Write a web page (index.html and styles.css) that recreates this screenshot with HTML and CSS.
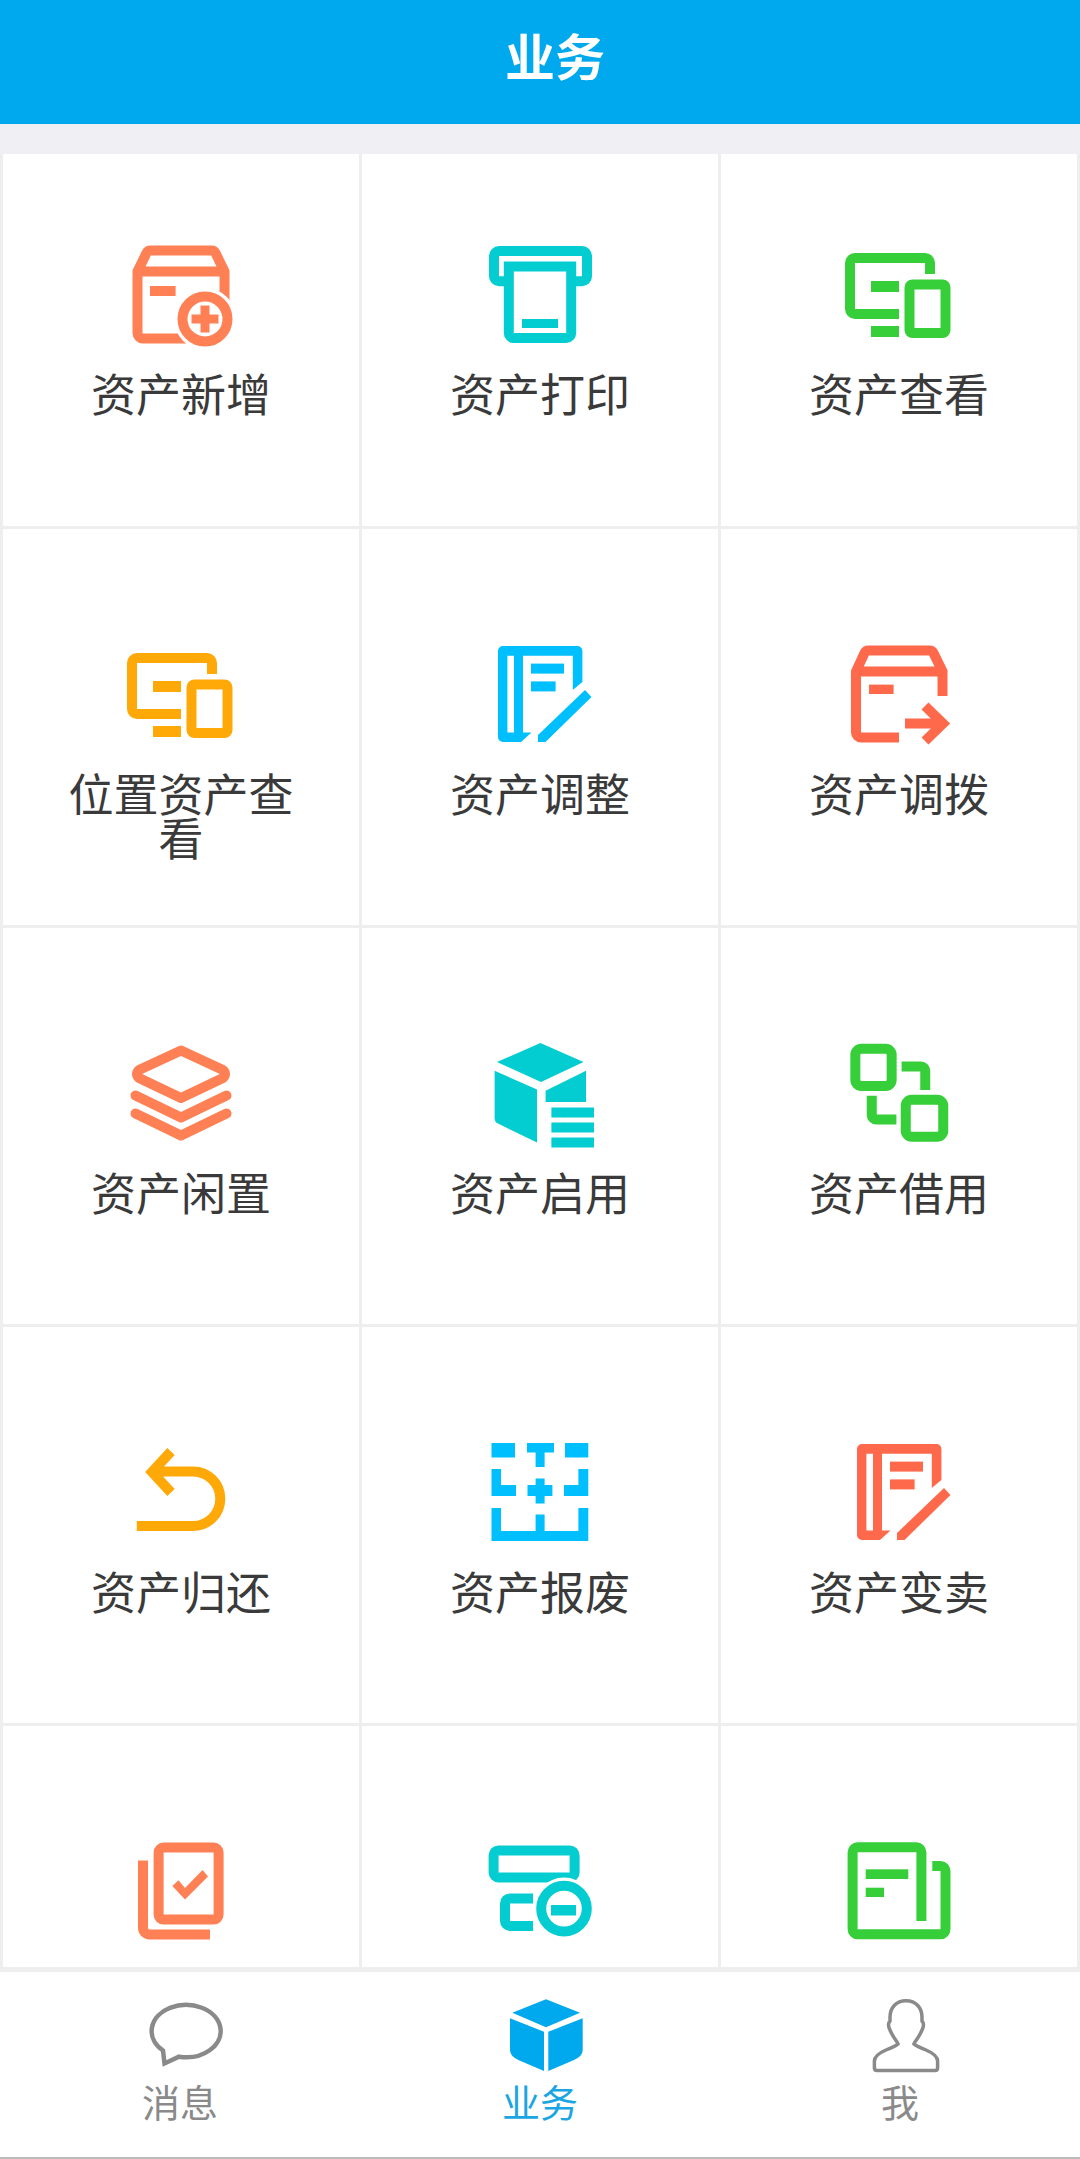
FILE: index.html
```html
<!DOCTYPE html>
<html lang="zh-CN">
<head>
    <meta charset="UTF-8">
    <meta name="viewport" content="width=device-width, initial-scale=1.0">
    <title>业务</title>
    <link rel="stylesheet" href="styles.css">
</head>
<body>
    <header class="topbar">业务</header>

    <main class="content">
        <div class="grid">
            <div class="cell first coral">
                <svg class="icon" viewBox="0 0 100 100">
                    <path class="line" d="M12 94.500a5.500 5.500 0 0 1-5.500-5.500V27.500L15.500 9q1-2.500 4-2.500h61q3 0 4 2.500l9 18.500V89a5.500 5.500 0 0 1-5.500 5.500zM6.500 27.500h87"/>
                    <rect x="19" y="42" width="25.600" height="10"/>
                    <circle class="halo" cx="74" cy="75" r="31"/>
                    <circle class="line" cx="74" cy="75" r="22.500"/>
                    <path d="M69.500 61.500h9v9h9v9h-9v9h-9v-9h-9v-9h9z"/>
                </svg>
                <span class="label">资产新增</span>
            </div>
            <div class="cell first teal">
                <svg class="icon" viewBox="0 0 100 100">
                    <path class="line" d="M18 37.300H9a5 5 0 0 1-5-5V12a5 5 0 0 1 5-5h83a5 5 0 0 1 5 5v20.300a5 5 0 0 1-5 5h-9"/>
                    <path class="line" d="M18.800 22.500h62.400V89a5 5 0 0 1-5 5H23.800a5 5 0 0 1-5-5z"/>
                    <rect x="32" y="75" width="36" height="9"/>
                </svg>
                <span class="label">资产打印</span>
            </div>
            <div class="cell first green">
                <svg class="icon" viewBox="0 0 100 100">
                    <path class="line" d="M50 70H6a5 5 0 0 1-5-5V19a5 5 0 0 1 5-5h70a5 5 0 0 1 5 5v11"/>
                    <rect x="22" y="37" width="28" height="11"/>
                    <rect x="22" y="82" width="28" height="11"/>
                    <rect class="line" x="60.500" y="40.500" width="36" height="48.500" rx="3"/>
                </svg>
                <span class="label">资产查看</span>
            </div>

            <div class="cell amber">
                <svg class="icon" viewBox="0 0 100 100">
                    <path class="line" d="M50 70H6a5 5 0 0 1-5-5V19a5 5 0 0 1 5-5h70a5 5 0 0 1 5 5v11"/>
                    <rect x="22" y="37" width="28" height="11"/>
                    <rect x="22" y="82" width="28" height="11"/>
                    <rect class="line" x="60.500" y="40.500" width="36" height="48.500" rx="3"/>
                </svg>
                <span class="label">位置资产查看</span>
            </div>
            <div class="cell blue">
                <svg class="icon" viewBox="0 0 100 100">
                    <path fill-rule="evenodd" d="M13 2h74.400a5 5 0 0 1 5 5v31l-9.600 8V11.700H33v76.800h8.500L31 98H13a5 5 0 0 1-5-5V7a5 5 0 0 1 5-5zM17.400 11.700H24v76.800h-6.600z"/>
                    <rect x="41" y="19.600" width="33" height="10"/>
                    <rect x="41" y="37.400" width="24.600" height="10"/>
                    <path d="M95 46l6.500 7-46 45H48v-7z"/>
                </svg>
                <span class="label">资产调整</span>
            </div>
            <div class="cell tomato">
                <svg class="icon" viewBox="0 0 100 100">
                    <path class="line" d="M50 93.500H12a5 5 0 0 1-5-5V27.500L15.500 9q1-2.500 4-2.500h61q3 0 4 2.500l9 18.500V52M7 27.500h86.500"/>
                    <rect x="20" y="40.600" width="24.600" height="9.400"/>
                    <path class="line" d="M56 79.600h38M76 62l18 17.600L76 97"/>
                </svg>
                <span class="label">资产调拨</span>
            </div>

            <div class="cell coral">
                <svg class="icon" viewBox="0 0 100 100">
                    <path class="line round" d="M50 7.500L92 27q4 4 0 8L50 55 8 35q-4-4 0-8z"/>
                    <path class="line round" d="M4.500 52.500l45.500 22 45.500-22M4.500 70.500l45.500 22 45.500-22"/>
                </svg>
                <span class="label">资产闲置</span>
            </div>
            <div class="cell teal">
                <svg class="icon" viewBox="0 0 100 100">
                    <path d="M50.400 0L93.500 19 51 39 7 19z"/>
                    <path d="M4.600 27.700L47 46.600v52.900L8 80.600q-3.400-1.600-3.400-5.600z"/>
                    <path d="M55.600 47.700L96 27.700V59H55.600z"/>
                    <rect x="61.400" y="64.500" width="42.600" height="10"/>
                    <rect x="61.400" y="79.500" width="42.600" height="10"/>
                    <rect x="61.400" y="94.500" width="42.600" height="10"/>
                </svg>
                <span class="label">资产启用</span>
            </div>
            <div class="cell green">
                <svg class="icon" viewBox="0 0 100 100">
                    <rect class="line" x="6.350" y="5.750" width="36.300" height="37.200" rx="6"/>
                    <rect class="line" x="56.750" y="56.750" width="37.500" height="37" rx="6"/>
                    <path class="line" d="M52.600 23.500H72a4.250 4.250 0 0 1 4.250 4.250V47M22.750 52.700V72a4.600 4.600 0 0 0 4.600 4.600H47.400"/>
                </svg>
                <span class="label">资产借用</span>
            </div>

            <div class="cell amber">
                <svg class="icon" viewBox="0 0 100 100">
                    <path class="line" d="M5.800 84H62a27.300 27.300 0 0 0 0-54.600H24M40 9.500L21 30l19 20.500"/>
                </svg>
                <span class="label">资产归还</span>
            </div>
            <div class="cell blue">
                <svg class="icon" viewBox="0 0 100 100">
                    <path d="M1.500 1H25v14.500H1.500zM1.500 27H11v16h15v11H1.500zM75 1h23.300v14.500H75zM88.400 27h9.900v27H74V43h14.400zM37 1h27v9.500h-9.400V25h-9V10.500H37zM45.600 36.500h9V43h7.800v11h-7.800v7.500h-9V54h-8.100V43h8.100zM1.500 66H11v23h34.600V72.500h9V89h33.800V66h9.900v33H1.500z"/>
                </svg>
                <span class="label">资产报废</span>
            </div>
            <div class="cell tomato">
                <svg class="icon" viewBox="0 0 100 100">
                    <path fill-rule="evenodd" d="M13 2h74.400a5 5 0 0 1 5 5v31l-9.600 8V11.700H33v76.800h8.500L31 98H13a5 5 0 0 1-5-5V7a5 5 0 0 1 5-5zM17.400 11.700H24v76.800h-6.600z"/>
                    <rect x="41" y="19.600" width="33" height="10"/>
                    <rect x="41" y="37.400" width="24.600" height="10"/>
                    <path d="M95 46l6.500 7-46 45H48v-7z"/>
                </svg>
                <span class="label">资产变卖</span>
            </div>

            <div class="cell coral">
                <svg class="icon" viewBox="0 0 100 100">
                    <rect class="line" x="27.600" y="6.600" width="60" height="72" rx="5"/>
                    <path class="line" d="M12 19.400V87a6.400 6.400 0 0 0 6.400 6.400H79"/>
                    <path d="M71.600 29l5.400 6.500-23 22.900L41.300 45l6.200-5.700L54 47z"/>
                </svg>
            </div>
            <div class="cell teal">
                <svg class="icon" viewBox="0 0 100 100">
                    <rect class="line" x="3.600" y="9.400" width="81" height="27" rx="5"/>
                    <path class="line" d="M43 57.400H20a5 5 0 0 0-5 5V80a5 5 0 0 0 5 5h23"/>
                    <circle class="halo" cx="74" cy="67.600" r="31"/>
                    <circle class="line" cx="74" cy="67.600" r="22.800"/>
                    <rect x="61" y="64" width="25" height="10.500"/>
                </svg>
            </div>
            <div class="cell green">
                <svg class="icon" viewBox="0 0 100 100">
                    <path class="line" d="M72.400 80V11.300a5 5 0 0 0-5-5H8.600a5 5 0 0 0-5 5V88a5 5 0 0 0 5 5.200H91.500a5 5 0 0 0 5-5.200V30a5 5 0 0 0-5-5h-8.200"/>
                    <rect x="16.700" y="28.300" width="42.600" height="9.700"/>
                    <rect x="16.700" y="46.700" width="18.300" height="9.300"/>
                </svg>
            </div>
        </div>
    </main>

    <nav class="tabbar">
        <div class="tab">
            <svg class="tab-icon" viewBox="0 0 74 74">
                <path class="thin" d="M30 57.700A34.500 26.200 0 1 0 14 51.500L15.500 64.500Z"/>
            </svg>
            <span class="tab-label">消息</span>
        </div>
        <div class="tab active">
            <svg class="tab-icon" viewBox="0 0 74 74">
                <path d="M37 .3L71 13.700 37 28.300 3.300 13.700z"/>
                <path d="M1 19.300l34 13.400V72L9.300 61Q1 57 1 51z"/>
                <path d="M39.300 32.700l34.400-13.400V51q0 6-8.700 10L39.300 72z"/>
            </svg>
            <span class="tab-label">业务</span>
        </div>
        <div class="tab">
            <svg class="tab-icon" viewBox="0 0 74 74">
                <path class="thin user" d="M37 1.700C27 1.700 21 9 21 18V22C19 24 19.500 28 21 31C23 36 25 39 28 43L29 45C27 47 22 49 17 51C10 54 5.400 57 5.400 62V69Q5.400 71.500 8 71.500H66Q68.600 71.500 68.600 69V62C68.600 57 64 54 57 51C52 49 47 47 45 45L46 43C49 39 51 36 53 31C54.500 28 55 24 53 22V18C53 9 47 1.700 37 1.700Z"/>
            </svg>
            <span class="tab-label">我</span>
        </div>
    </nav>
</body>
</html>
```

FILE: styles.css
```css
html, body {
    margin: 0;
    padding: 0;
    height: 2159px;
    overflow: hidden;
}

body {
    display: flex;
    flex-direction: column;
    font-family: "Noto Sans CJK SC", "Noto Sans", sans-serif;
    background-color: #efeff4;
}

.topbar {
    flex: none;
    height: 124px;
    box-sizing: border-box;
    padding: 22px 0 0 30px;
    text-align: center;
    font-size: 50px;
    line-height: 64px;
    font-weight: 700;
    color: #fff;
    background-color: #00a9ee;
}

.content {
    flex: 1;
    min-height: 0;
    overflow: hidden;
    padding-top: 30px;
}

.grid {
    display: grid;
    grid-template-columns: repeat(3, 1fr);
    grid-template-rows: 372px 396px 396px 396px 241px;
    gap: 3px;
    padding: 0 3px 5px;
    background-color: #eee;
}

.cell {
    display: flex;
    flex-direction: column;
    align-items: center;
    padding-top: 115px;
    background-color: #fff;
}

.cell.first {
    padding-top: 90px;
}

.icon {
    flex: none;
    width: 100px;
    height: 100px;
    overflow: visible;
    fill: currentColor;
}

.line {
    fill: none;
    stroke: currentColor;
    stroke-width: 10;
}

.round {
    stroke-linejoin: round;
    stroke-linecap: round;
    stroke-width: 10;
}

.halo {
    fill: #fff;
}

.label {
    width: 240px;
    margin-top: 27px;
    text-align: center;
    font-size: 45px;
    line-height: 44px;
    color: #3a3a3a;
}

/* icon colors */
.coral { color: #ff8055; }
.teal { color: #03cdd0; }
.green { color: #36cf3a; }
.amber { color: #ffa908; }
.blue { color: #00bfff; }
.tomato { color: #ff694b; }

.tabbar {
    flex: none;
    display: grid;
    grid-template-columns: repeat(3, 1fr);
    height: 187px;
    box-sizing: border-box;
    padding-top: 27px;
    background-color: #fff;
    border-bottom: 2px solid #bbb;
}

.tab {
    display: flex;
    flex-direction: column;
    align-items: center;
    color: #8a8a8a;
}

.tab.active {
    color: #00a9ee;
}

.tab.active .tab-label {
    color: #1aa6e2;
}

.tab-icon {
    flex: none;
    width: 74px;
    height: 74px;
    margin-left: 12px;
    overflow: visible;
    fill: currentColor;
}

.thin {
    fill: none;
    stroke: currentColor;
    stroke-width: 4.5;
}

.user {
    stroke-width: 3.5;
}

.tab-label {
    margin-top: 6px;
    font-size: 38px;
    line-height: 44px;
}
```
